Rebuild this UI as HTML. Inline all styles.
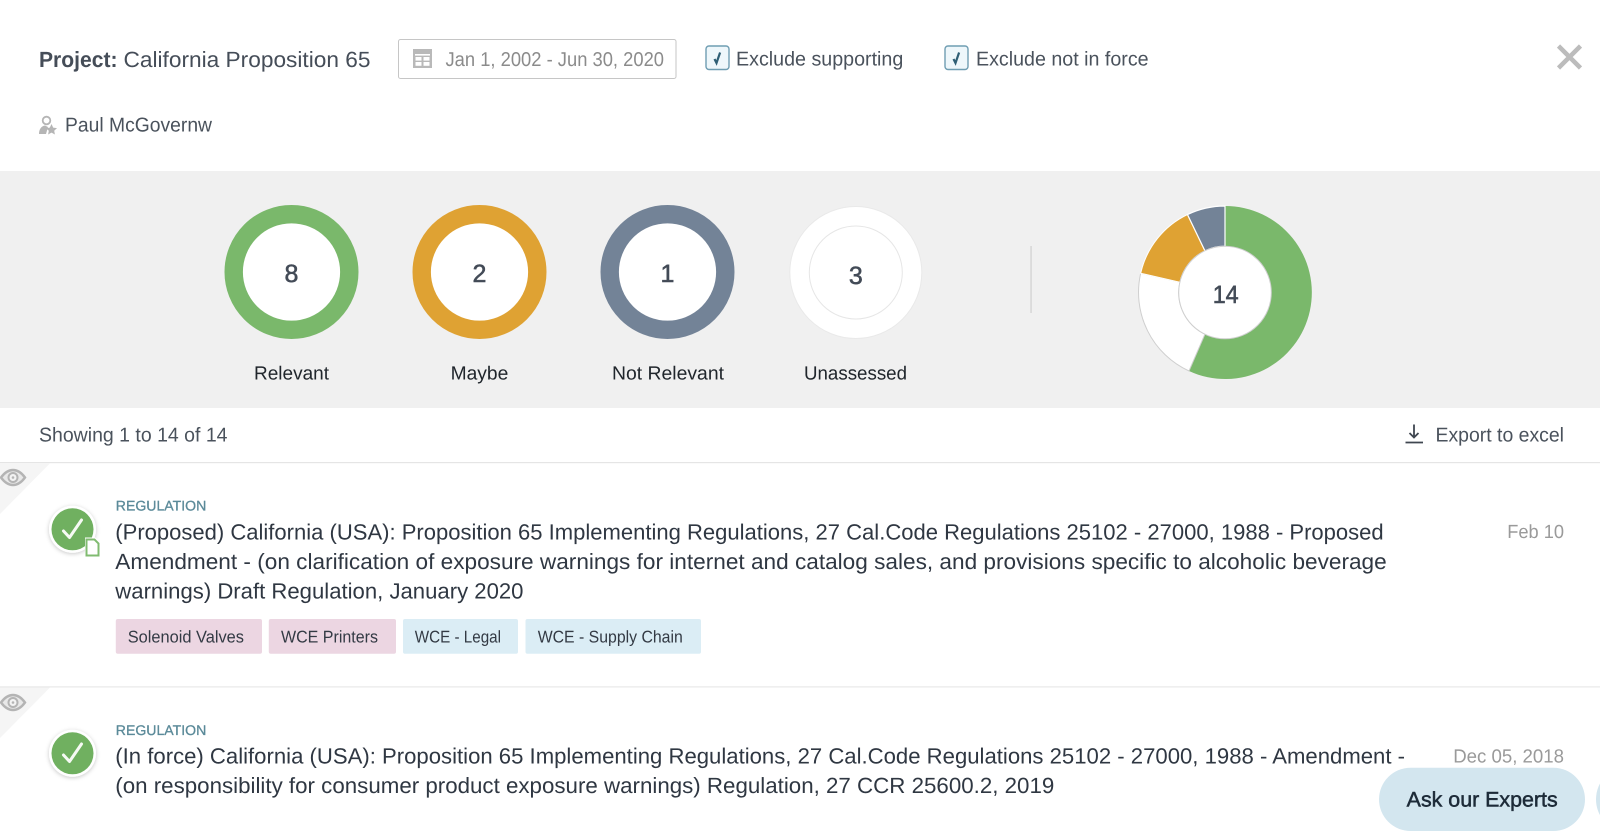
<!DOCTYPE html>
<html lang="en">
<head>
<meta charset="utf-8">
<title>California Proposition 65</title>
<style>
html,body{margin:0;padding:0;background:#fff;width:1600px;height:838px;overflow:hidden}
svg{display:block;filter:blur(.3px)}
text{font-family:"Liberation Sans",sans-serif;text-rendering:geometricPrecision}
.t{font-size:22px;fill:#2f3742}
.h{font-size:22px;fill:#454d58}
.m{font-size:20px;fill:#4a525c}
.l{font-size:19px;fill:#20262c}
.n{font-size:25px;fill:#434b57;stroke:#434b57;stroke-width:.55px;text-anchor:middle}
.d{font-size:19px;fill:#9a9a9a}
.r{font-size:14px;fill:#5b8a99;stroke:#5b8a99;stroke-width:.3px}
.g{font-size:17px;fill:#333a44}
</style>
</head>
<body>
<svg width="1600" height="838" viewBox="0 0 1600 838" xmlns="http://www.w3.org/2000/svg">
<defs>
<filter id="s" x="-30%" y="-30%" width="160%" height="160%"><feDropShadow dx="0" dy="1" stdDeviation="2" flood-color="#000" flood-opacity=".22"/></filter>
</defs>
<rect width="1600" height="838" fill="#fff"/>

<!-- header -->
<text x="39" y="67" class="h" font-weight="700" textLength="78.500" lengthAdjust="spacingAndGlyphs">Project:</text>
<text x="123.500" y="67" class="h" textLength="247" lengthAdjust="spacingAndGlyphs">California Proposition 65</text>
<rect x="398.500" y="39.500" width="277.500" height="39" rx="2" fill="#fff" stroke="#c6c6c6"/>
<path d="M413 49h19v19h-19z" fill="#b9b9b9"/>
<g fill="#fff">
<rect x="415" y="54" width="15" height="1.600"/>
<rect x="415.500" y="57" width="6" height="3.600"/><rect x="423.500" y="57" width="6" height="3.600"/>
<rect x="415.500" y="62" width="6" height="3.800"/><rect x="423.500" y="62" width="6" height="3.800"/>
</g>
<text x="445.500" y="66.200" style="font-size:20px;fill:#8b8b8b" textLength="218.500" lengthAdjust="spacingAndGlyphs">Jan 1, 2002 - Jun 30, 2020</text>

<rect x="706" y="46" width="23" height="23.500" rx="3" fill="#eef7fb" stroke="#6f9db2" stroke-width="1.400"/>
<path d="M714.500 59l2 4 3.600-10.500" fill="none" stroke="#2f5f75" stroke-width="2.200"/>
<text x="736" y="65.700" class="m" textLength="167.300" lengthAdjust="spacingAndGlyphs">Exclude supporting</text>
<rect x="945" y="46" width="23" height="23.500" rx="3" fill="#eef7fb" stroke="#6f9db2" stroke-width="1.400"/>
<path d="M953.500 59l2 4 3.600-10.500" fill="none" stroke="#2f5f75" stroke-width="2.200"/>
<text x="976" y="65.700" class="m" textLength="172.600" lengthAdjust="spacingAndGlyphs">Exclude not in force</text>
<path d="M1558.500 46l22 22M1580.500 46l-22 22" stroke="#bcbcbc" stroke-width="4.500" fill="none"/>

<circle cx="46.500" cy="120.500" r="3.800" fill="none" stroke="#b5b5b5" stroke-width="1.800"/>
<path d="M39 134c0-5 2.500-8 6-8.500l3 1.500-2 7z" fill="#b5b5b5"/>
<path d="M51.500 124l1.700 3.600 3.800.5-2.800 2.600.7 3.800-3.400-1.900-3.400 1.900.7-3.800-2.800-2.600 3.800-.5z" fill="#b5b5b5"/>
<text x="65" y="131.700" class="m" textLength="147" lengthAdjust="spacingAndGlyphs">Paul McGovernw</text>

<!-- band -->
<rect x="0" y="171" width="1600" height="237" fill="#f0f0f0"/>
<circle cx="291.500" cy="272" r="57.800" fill="#fff" stroke="#7ab86b" stroke-width="18.400"/>
<circle cx="479.500" cy="272" r="57.800" fill="#fff" stroke="#dfa233" stroke-width="18.400"/>
<circle cx="667.500" cy="272" r="57.800" fill="#fff" stroke="#738397" stroke-width="18.400"/>
<circle cx="855.800" cy="272.500" r="66" fill="#fff" stroke="#e9e9e9"/>
<circle cx="855.800" cy="272.500" r="46.500" fill="#fff" stroke="#e6e6e6"/>
<text x="291.500" y="281.800" class="n">8</text>
<text x="479.500" y="281.800" class="n">2</text>
<text x="667.500" y="281.800" class="n">1</text>
<text x="855.800" y="284" class="n">3</text>
<text x="254" y="379.500" class="l" textLength="75" lengthAdjust="spacingAndGlyphs">Relevant</text>
<text x="450.600" y="379.500" class="l" textLength="57.700" lengthAdjust="spacingAndGlyphs">Maybe</text>
<text x="612" y="379.500" class="l" textLength="112" lengthAdjust="spacingAndGlyphs">Not Relevant</text>
<text x="804" y="379.500" class="l" textLength="103" lengthAdjust="spacingAndGlyphs">Unassessed</text>
<rect x="1030.300" y="246" width="1.500" height="67" fill="#d6d6d6"/>

<!-- donut -->
<path d="M1225 206A86.500 86.500 0 1 1 1189 371L1204.910 334.220A46.300 46.300 0 1 0 1225 246.200Z" fill="#7ab86b"/>
<path d="M1189 371A86.500 86.500 0 0 1 1140.670 273.250L1179.860 282.200A46.300 46.300 0 0 0 1204.910 334.220Z" fill="#fff" stroke="#cfcfcf" stroke-width="1"/>
<path d="M1140.670 273.250A86.500 86.500 0 0 1 1187.470 214.560L1204.910 250.780A46.300 46.300 0 0 0 1179.860 282.200Z" fill="#dfa233" stroke="#fff" stroke-width="1"/>
<path d="M1187.470 214.560A86.500 86.500 0 0 1 1225 206L1225 246.200A46.300 46.300 0 0 0 1204.910 250.780Z" fill="#738397" stroke="#fff" stroke-width="1.200"/>
<circle cx="1225" cy="292.500" r="46.300" fill="#fff" stroke="#cfcfcf"/>
<text x="1225.700" y="302.800" class="n" textLength="26" lengthAdjust="spacingAndGlyphs">14</text>

<!-- toolbar -->
<text x="39" y="441.500" class="m" textLength="188.500" lengthAdjust="spacingAndGlyphs">Showing 1 to 14 of 14</text>
<path d="M1414 424.500v13M1409.500 433l4.500 4.500 4.500-4.500M1405.500 442.500h17.500" fill="none" stroke="#3f4650" stroke-width="1.800"/>
<text x="1435.500" y="441.700" class="m" textLength="128.500" lengthAdjust="spacingAndGlyphs">Export to excel</text>
<rect x="0" y="462" width="1600" height="1.200" fill="#e5e5e5"/>

<!-- item 1 -->
<path d="M0 463.200H50L0 514Z" fill="#f5f5f5"/>
<path d="M1 477.500C5 472 9 470 13 470s8 2 12 7.500C21 483 17 485 13 485s-8-2-12-7.500Z" fill="#e8e8e8" stroke="#b4b4b4" stroke-width="2.400"/>
<circle cx="13" cy="477.500" r="4.500" fill="#f3f3f3" stroke="#b4b4b4" stroke-width="2"/>
<circle cx="13" cy="477.500" r="1.300" fill="#b4b4b4"/>
<circle cx="72.500" cy="529.300" r="23.500" fill="#fff" filter="url(#s)"/>
<circle cx="72.500" cy="529.300" r="21" fill="#70b060"/>
<path d="M63.500 531l6 6.500 12-17.500" fill="none" stroke="#f6faf4" stroke-width="3" stroke-linecap="round" stroke-linejoin="round"/>
<path d="M85 537.500h10.500l5 5v15h-15.500z" fill="#fff"/>
<path d="M86.500 539.500h8l4 4v12h-12z" fill="#fff" stroke="#80bb70" stroke-width="2" stroke-linejoin="miter"/>
<text x="115.800" y="510.700" class="r" textLength="90.500" lengthAdjust="spacingAndGlyphs">REGULATION</text>
<text x="115.300" y="539.500" class="t" textLength="1268.400" lengthAdjust="spacingAndGlyphs">(Proposed) California (USA): Proposition 65 Implementing Regulations, 27 Cal.Code Regulations 25102 - 27000, 1988 - Proposed</text>
<text x="115.300" y="569" class="t" textLength="1271.400" lengthAdjust="spacingAndGlyphs">Amendment - (on clarification of exposure warnings for internet and catalog sales, and provisions specific to alcoholic beverage</text>
<text x="115.300" y="598.700" class="t" textLength="408.200" lengthAdjust="spacingAndGlyphs">warnings) Draft Regulation, January 2020</text>
<text x="1507.200" y="538" class="d" textLength="56.800" lengthAdjust="spacingAndGlyphs">Feb 10</text>

<rect x="115.800" y="619" width="146.200" height="34.700" rx="2" fill="#ecd6e2"/>
<rect x="268.800" y="619" width="127.200" height="34.700" rx="2" fill="#ecd6e2"/>
<rect x="403" y="619" width="115" height="34.700" rx="2" fill="#dbedf5"/>
<rect x="525.500" y="619" width="175.500" height="34.700" rx="2" fill="#dbedf5"/>
<text x="127.700" y="642.700" class="g" textLength="116.300" lengthAdjust="spacingAndGlyphs">Solenoid Valves</text>
<text x="281" y="642.700" class="g" textLength="97" lengthAdjust="spacingAndGlyphs">WCE Printers</text>
<text x="414.800" y="642.700" class="g" textLength="86.200" lengthAdjust="spacingAndGlyphs">WCE - Legal</text>
<text x="537.700" y="642.700" class="g" textLength="145.100" lengthAdjust="spacingAndGlyphs">WCE - Supply Chain</text>
<rect x="0" y="686.300" width="1600" height="1.200" fill="#e8e8e8"/>

<!-- item 2 -->
<path d="M0 687.500H50L0 738Z" fill="#f5f5f5"/>
<path d="M1 702.500C5 697 9 695 13 695s8 2 12 7.500C21 708 17 710 13 710s-8-2-12-7.500Z" fill="#e8e8e8" stroke="#b4b4b4" stroke-width="2.400"/>
<circle cx="13" cy="702.500" r="4.500" fill="#f3f3f3" stroke="#b4b4b4" stroke-width="2"/>
<circle cx="13" cy="702.500" r="1.300" fill="#b4b4b4"/>
<circle cx="72.500" cy="753.300" r="23.500" fill="#fff" filter="url(#s)"/>
<circle cx="72.500" cy="753.300" r="21" fill="#70b060"/>
<path d="M63.500 755l6 6.500 12-17.500" fill="none" stroke="#f6faf4" stroke-width="3" stroke-linecap="round" stroke-linejoin="round"/>
<text x="115.800" y="735" class="r" textLength="90.500" lengthAdjust="spacingAndGlyphs">REGULATION</text>
<text x="115.300" y="763.500" class="t" textLength="1289.700" lengthAdjust="spacingAndGlyphs">(In force) California (USA): Proposition 65 Implementing Regulations, 27 Cal.Code Regulations 25102 - 27000, 1988 - Amendment -</text>
<text x="115.300" y="793" class="t" textLength="939" lengthAdjust="spacingAndGlyphs">(on responsibility for consumer product exposure warnings) Regulation, 27 CCR 25600.2, 2019</text>
<text x="1453.200" y="762.500" class="d" textLength="110.800" lengthAdjust="spacingAndGlyphs">Dec 05, 2018</text>

<!-- floating -->
<rect x="1379" y="767.700" width="206" height="63.300" rx="31.600" fill="#d3e6ef"/>
<rect x="1596" y="767.700" width="60" height="63.300" rx="31.600" fill="#d3e6ef"/>
<text x="1406.700" y="806.500" style="font-size:21px;fill:#1d2b38;stroke:#1d2b38;stroke-width:.5px" textLength="151" lengthAdjust="spacingAndGlyphs">Ask our Experts</text>
</svg>
</body>
</html>
